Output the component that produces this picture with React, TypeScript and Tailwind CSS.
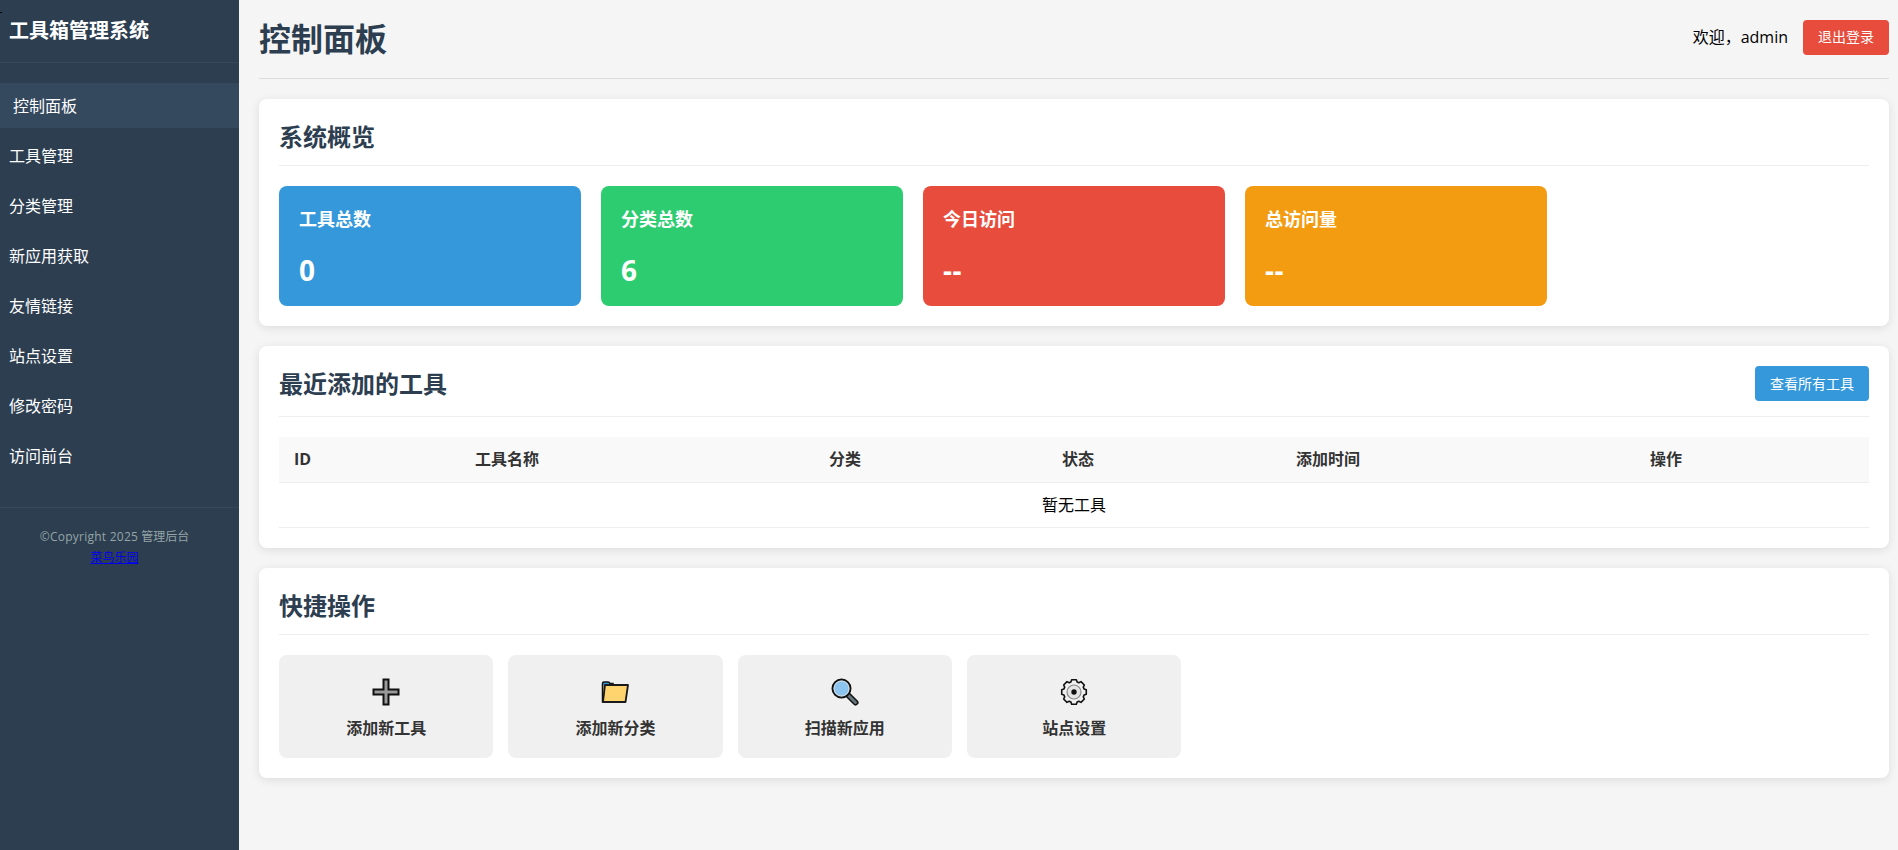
import React from 'react';

const navItems = ['控制面板', '工具管理', '分类管理', '新应用获取', '友情链接', '站点设置', '修改密码', '访问前台'];

const stats = [
  { label: '工具总数', value: '0', color: 'bg-[#3498db]' },
  { label: '分类总数', value: '6', color: 'bg-[#2ecc71]' },
  { label: '今日访问', value: '--', color: 'bg-[#e74c3c]' },
  { label: '总访问量', value: '--', color: 'bg-[#f39c12]' },
];

function PlusIcon() {
  return (
    <svg width="30" height="30" viewBox="0 0 30 30">
      <path d="M12.500 2.500h5v10h10v5h-10v10h-5v-10h-10v-5h10z" fill="#9a9a9a" stroke="#111" strokeWidth="2" />
    </svg>
  );
}

function FolderIcon() {
  return (
    <svg width="30" height="30" viewBox="0 0 30 30">
      <path d="M2.500 25V6.500q0-1.500 1.500-1.500h4q1.500 0 2 1.500h3v3H6v15z" fill="#3498db" stroke="#111" strokeWidth="1.500" />
      <path d="M3.500 25V8.500h2V25z" fill="#f3a712" />
      <path d="M5 8h23l-2.500 17H3z" fill="#ffd36e" stroke="#1a1a1a" strokeWidth="1.800" strokeLinejoin="round" />
    </svg>
  );
}

function SearchIcon() {
  return (
    <svg width="30" height="30" viewBox="0 0 30 30">
      <path d="M18 18l7.500 7.500" stroke="#111" strokeWidth="6" strokeLinecap="round" />
      <path d="M18.500 18.500l7 7" stroke="#64757c" strokeWidth="3" strokeLinecap="round" />
      <circle cx="11.500" cy="11.500" r="9" fill="#8cc4f0" stroke="#111" strokeWidth="2" />
      <circle cx="11.500" cy="11.500" r="7.500" fill="none" stroke="#dcdcdc" strokeWidth="1" />
    </svg>
  );
}

// eight stubby teeth round a circle
function gearPath(cx: number, cy: number, outer: number, root: number) {
  const pts: string[] = [];
  for (let i = 0; i < 8; i++) {
    const a = (i * Math.PI) / 4;
    [[-0.3, root], [-0.19, outer], [0.19, outer], [0.3, root]].forEach(([d, r]) => {
      pts.push(`${(cx + r * Math.cos(a + d)).toFixed(2)} ${(cy + r * Math.sin(a + d)).toFixed(2)}`);
    });
  }
  return `M${pts.join('L')}z`;
}

function GearIcon() {
  return (
    <svg width="30" height="30" viewBox="0 0 30 30">
      <path d={gearPath(15, 15, 12.5, 10.5)} fill="#f0f0f0" stroke="#111" strokeWidth="1.600" strokeLinejoin="round" />
      <circle cx="15" cy="15" r="7" fill="#e4e4e4" stroke="#8a8a8a" strokeWidth="1.200" />
      <circle cx="15" cy="15" r="2.700" fill="#111" />
    </svg>
  );
}

const actions = [
  { label: '添加新工具', icon: <PlusIcon /> },
  { label: '添加新分类', icon: <FolderIcon /> },
  { label: '扫描新应用', icon: <SearchIcon /> },
  { label: '站点设置', icon: <GearIcon /> },
];

function Card({ title, extra, children }: { title: string; extra?: React.ReactNode; children: React.ReactNode }) {
  return (
    <section className="mb-5 rounded-lg bg-white p-5 shadow-[0_2px_10px_rgba(0,0,0,0.1)]">
      <div className="mb-5 flex items-start justify-between border-b border-[#eeeeee] pb-[10px]">
        <h2 className="text-2xl leading-[35px] font-bold text-[#2c3e50] pb-px">{title}</h2>
        {extra}
      </div>
      {children}
    </section>
  );
}

export default function App() {
  return (
    <div className="relative flex min-h-[850px] bg-[#f5f5f5] font-['Open_Sans','Noto_Sans_CJK_SC',sans-serif] text-black">
      <span className="absolute top-[12px] left-0 h-px w-[2px] bg-black" />
      {/* Sidebar */}
      <aside className="w-[239px] shrink-0 bg-[#2c3e50] text-white">
        <div className="h-[63px] border-b border-[#34495e] pt-[14px] pl-[9px]">
          <h1 className="text-xl leading-[34px] font-bold">工具箱管理系统</h1>
        </div>
        <nav className="h-[445px] border-b border-[#34495e] pt-5">
          {navItems.map((item, i) => (
            <a
              key={item}
              className={
                i === 0
                  ? 'mb-[5px] block h-[45px] bg-[#34495e] pl-[13px] text-base leading-[47px] text-white'
                  : 'mb-[5px] block h-[45px] pl-[9px] text-base leading-[47px] text-white'
              }
            >
              {item}
            </a>
          ))}
        </nav>
        <div className="pt-[18px] pr-[10px] text-center text-xs leading-[21px] text-[#95a5a6]">
          <p><span className="tracking-[0.25px]">©Copyright 2025</span> 管理后台</p>
          <a className="text-[#0000ee] underline">菜鸟乐园</a>
        </div>
      </aside>

      {/* Main */}
      <main className="flex-1 pt-0 pr-[9px] pl-5">
        <header className="mb-5 flex h-[79px] items-center justify-between border-b border-[#dddddd] pb-[1px]">
          <h1 className="text-[32px] font-bold text-[#2c3e50]">控制面板</h1>
          <div className="mb-[3px] flex items-center gap-[15px]">
            <span className="text-base">欢迎，admin</span>
            <button className="h-[35px] w-[86px] rounded bg-[#e74c3c] text-sm text-white">退出登录</button>
          </div>
        </header>

        <Card title="系统概览">
          <div className="flex gap-5">
            {stats.map(s => (
              <div key={s.label} className={`h-[120px] w-[302px] rounded-lg px-5 pt-[18px] text-white ${s.color}`}>
                <h3 className="text-lg leading-[30px] font-bold">{s.label}</h3>
                <p className="mt-4 text-[28px] leading-[40px] font-bold tracking-[0.5px]">{s.value}</p>
              </div>
            ))}
          </div>
        </Card>

        <Card
          title="最近添加的工具"
          extra={<button className="mb-[5px] h-[35px] w-[114px] rounded bg-[#3498db] text-sm text-white">查看所有工具</button>}
        >
          <table className="w-full table-fixed border-collapse text-left text-base">
            <thead>
              <tr className="h-[45px] border-b border-[#eeeeee] bg-[#f9f9f9]">
                <th className="w-[181px] pl-[15px] font-bold text-[#333333]">ID</th>
                <th className="w-[354px] pl-[15px] font-bold text-[#333333]">工具名称</th>
                <th className="w-[233px] pl-[15px] font-bold text-[#333333]">分类</th>
                <th className="w-[234px] pl-[15px] font-bold text-[#333333]">状态</th>
                <th className="w-[354px] pl-[15px] font-bold text-[#333333]">添加时间</th>
                <th className="pl-[15px] font-bold text-[#333333]">操作</th>
              </tr>
            </thead>
            <tbody>
              <tr className="h-[45px] border-b border-[#eeeeee]">
                <td colSpan={6} className="text-center text-base">暂无工具</td>
              </tr>
            </tbody>
          </table>
        </Card>

        <Card title="快捷操作">
          <div className="flex gap-[15px]">
            {actions.map(a => (
              <a key={a.label} className="flex h-[103px] w-[214.33px] flex-col items-center rounded-lg bg-[#f0f0f0] pt-[22px] text-[#333333]">
                {a.icon}
                <span className="mt-[8px] text-base leading-[26px] font-bold">{a.label}</span>
              </a>
            ))}
          </div>
        </Card>
      </main>
    </div>
  );
}
